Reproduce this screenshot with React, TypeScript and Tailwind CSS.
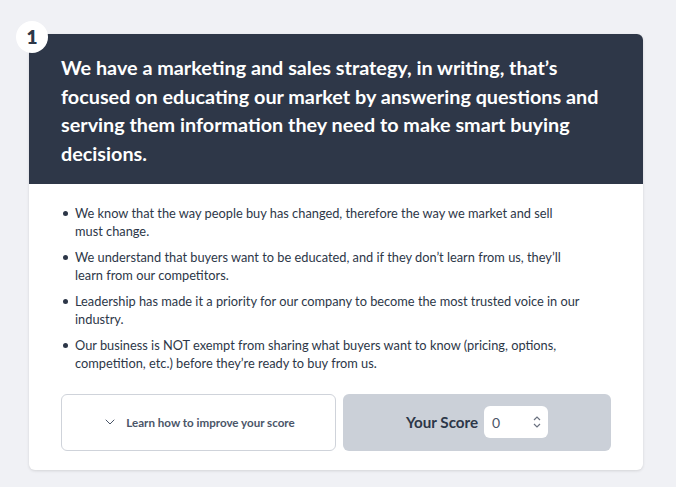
import { ChevronDown } from "lucide-react";

const bullets = [
  "We know that the way people buy has changed, therefore the way we market and sell must change.",
  "We understand that buyers want to be educated, and if they don\u2019t learn from us, they\u2019ll learn from our competitors.",
  "Leadership has made it a priority for our company to become the most trusted voice in our industry.",
  "Our business is NOT exempt from sharing what buyers want to know (pricing, options, competition, etc.) before they\u2019re ready to buy from us.",
];

export default function App() {
  return (
    <div
      className="min-h-[487px] bg-[#f0f1f5] pl-[29px] pr-[33px] pt-[34px] pb-4"
      style={{ fontFamily: "Lato, 'Liberation Sans', sans-serif" }}
    >
      <div className="relative rounded-md bg-white shadow-[0_1px_3px_rgba(0,0,0,0.12)]">
        <div className="absolute -left-[13px] -top-[13px] flex h-8 w-8 items-center justify-center rounded-full bg-white text-[19px] font-extrabold text-[#2d3748]">
          1
        </div>
        <div className="rounded-t-md bg-[#2e3748] px-8 pb-[16px] pt-[19px]">
          <h2 className="max-w-[560px] text-[19.8px] font-bold leading-[28.7px] text-white">
            We have a marketing and sales strategy, in writing, that’s focused on educating our market by answering
            questions and serving them information they need to make smart buying decisions.
          </h2>
        </div>
        <div className="px-8 pb-[19px] pt-[20px]">
          <ul className="mr-[29px] flex flex-col gap-[7px] pl-[14px] text-[12.8px] leading-[18.5px] text-[#2d3748]">
            {bullets.map((b) => (
              <li key={b} className="relative">
                <span className="absolute -left-[12px] top-[7px] h-[5px] w-[5px] rounded-full bg-[#2d3748]" />
                {b}
              </li>
            ))}
          </ul>
          <div className="mt-[21px] flex gap-[7px]">
            <button className="flex h-[57px] w-[275px] items-center justify-center gap-2 rounded-md border border-[#cfd3da] bg-white text-[11.6px] font-bold text-[#4a5568]">
              <ChevronDown className="h-4 w-4" strokeWidth={1.5} />
              Learn how to improve your score
            </button>
            <div className="flex h-[57px] flex-1 items-center justify-center gap-[6px] rounded-md bg-[#cbd0d8]">
              <span className="text-[15.2px] font-bold text-[#2d3748]">Your Score</span>
              <div className="flex h-[32px] w-[64px] items-center justify-between rounded-md bg-white pl-[8px] pr-[7px]">
                <span className="text-[14px] text-[#4a5568]">0</span>
                <svg width="8" height="14" viewBox="0 0 8 14" fill="none" stroke="#6b7280" strokeWidth="1.2">
                  <path d="M1 5 L4 2 L7 5" />
                  <path d="M1 9 L4 12 L7 9" />
                </svg>
              </div>
            </div>
          </div>
        </div>
      </div>
    </div>
  );
}
